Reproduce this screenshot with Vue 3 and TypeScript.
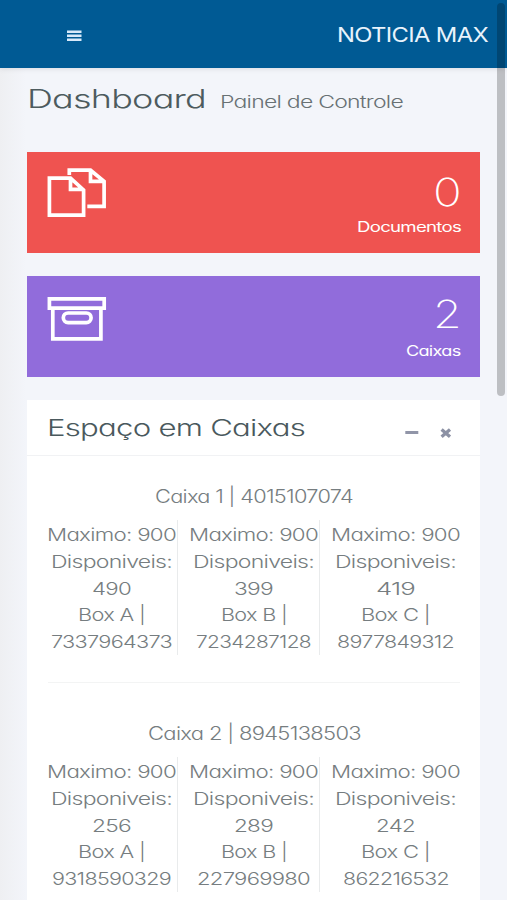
<script setup lang="ts">
import { h, type FunctionalComponent } from 'vue'

interface FitProps { text: string; w: number; size: number; lh: number; base: number }

// A line of text whose advance width is stretched to `w`
const FitText: FunctionalComponent<FitProps> = (p) =>
  h('svg', { class: 'fit', width: p.w, height: p.lh, 'aria-label': p.text }, [
    h('text', {
      x: 0, y: p.base, 'font-size': p.size, textLength: p.w, lengthAdjust: 'spacingAndGlyphs',
    }, p.text),
  ])
FitText.props = ['text', 'w', 'size', 'lh', 'base']

type Line = [string, number]
interface Caixa { title: string; w: number; boxes: Line[][] }

const box = (free: string, name: string, nameW: number, code: string, codeW: number): Line[] => [
  ['Maximo: 900', 129], ['Disponiveis:', 121], [free, 39], [`Box ${name} |`, nameW], [code, codeW],
]

const caixas: Caixa[] = [
  {
    title: 'Caixa 1 | 4015107074', w: 198,
    boxes: [
      box('490', 'A', 67, '7337964373', 121),
      box('399', 'B', 66, '7234287128', 115),
      box('419', 'C', 69, '8977849312', 117),
    ],
  },
  {
    title: 'Caixa 2 | 8945138503', w: 213,
    boxes: [
      box('256', 'A', 67, '9318590329', 119),
      box('289', 'B', 66, '227969980', 113),
      box('242', 'C', 69, '862216532', 106),
    ],
  },
]
</script>

<template>
  <div class="page">
    <header class="topbar">
      <svg class="burger" width="15" height="12" viewBox="0 0 15 12">
        <path d="M0 1.7h14.5M0 5.8h14.5M0 9.8h14.5" stroke="#d8eafa" stroke-width="2.6" />
      </svg>
      <FitText class="brand" text="NOTICIA MAX" :w="151" :size="20" :lh="24" :base="20" />
    </header>

    <main class="content">
      <div class="heading">
        <FitText class="h1" text="Dashboard" :w="179" :size="25.5" :lh="34" :base="26" />
        <FitText class="sub" text="Painel de Controle" :w="183" :size="16.8" :lh="34" :base="26" />
      </div>

      <section class="tile red">
        <svg class="icon" width="60" height="50" viewBox="0 0 60 50" fill="none" stroke="#fff" stroke-width="3.7">
          <path d="M2.4 10.2H23.5L36.6 22V47.2H2.4zM23.5 10.2V21.4H36.6" />
          <path d="M22.3 7V2.2H43.5L57.1 13.3V38.4H40.3M43.5 2.2V13.3H57.1" />
        </svg>
        <div class="figures">
          <FitText class="num" text="0" :w="28" :size="39" :lh="38" :base="34.5" />
          <FitText class="lab" text="Documentos" :w="104" :size="14" :lh="20" :base="19" />
        </div>
      </section>

      <section class="tile purple">
        <svg class="icon" width="60" height="50" viewBox="0 0 60 50" fill="none" stroke="#fff" stroke-width="3.7">
          <path d="M2.4 6.9H57.2V16.2H2.4zM5.8 16.2V46.9H53.9V16.2" />
          <rect x="16.3" y="21" width="27.8" height="9.6" rx="4.8" />
        </svg>
        <div class="figures">
          <FitText class="num" text="2" :w="28" :size="39" :lh="38" :base="33.3" />
          <FitText class="lab" text="Caixas" :w="54.5" :size="14" :lh="20" :base="19" />
        </div>
      </section>

      <section class="card">
        <div class="card-head">
          <FitText class="h2" text="Espaço em Caixas" :w="258" :size="23" :lh="34" :base="26" />
          <div class="tools">
            <svg width="14" height="12" viewBox="0 0 14 12"><path d="M.3 5.5h13" stroke="#9195a8" stroke-width="3" /></svg>
            <svg width="12" height="12" viewBox="0 0 12 12"><path d="M1.6 2.6l8.4 7.2M10 2.6l-8.4 7.2" stroke="#8c91a4" stroke-width="3.3" /></svg>
          </div>
        </div>

        <div class="card-body">
          <article v-for="c in caixas" :key="c.title" class="caixa">
            <FitText class="title" :text="c.title" :w="c.w" :size="18" :lh="27" :base="20" />
            <div class="boxes">
              <div v-for="(b, i) in c.boxes" :key="i" class="box">
                <FitText v-for="l in b" :key="l[0]" :text="l[0]" :w="l[1]" :size="17.6" :lh="26.8" :base="20.6" />
              </div>
            </div>
          </article>
        </div>
      </section>
    </main>

    <div class="scrollbar"></div>
  </div>
</template>

<style>
body { overflow: hidden; }
.fit { display: block; flex: none; overflow: visible; letter-spacing: -.035em; }
</style>

<style scoped>
.page {
  position: relative;
  box-sizing: border-box;
  width: 507px;
  height: 900px;
  overflow: hidden;
  background: linear-gradient(90deg, #eeeff2 0, #f3f5fa 26px) #f3f5fa;
  font-family: Inter, 'Open Sans', sans-serif;
  font-feature-settings: 'cv11' 1;
  font-weight: 300;
  fill: #767d80;
}
.topbar {
  display: flex;
  justify-content: space-between;
  align-items: flex-start;
  box-sizing: border-box;
  height: 67.5px;
  padding: 22px 19.5px 0 67px;
  background: #005a94;
  box-shadow: 0 1px 5px rgba(60, 60, 80, .13);
}
.burger { margin-top: 8px; }
.brand { fill: #e8f3fc; font-weight: 400; }
.content { padding: 14.5px 27px 0 27px; }
.heading { display: flex; gap: 14px; height: 70px; }
.h1 { fill: #4d5b5e; font-weight: 350; }
.sub { fill: #687174; font-weight: 350; }
.tile {
  display: flex;
  justify-content: space-between;
  box-sizing: border-box;
  height: 101px;
  margin-bottom: 23px;
  padding: 15.5px 19.5px 0 20px;
}
.red { background: #ef5350; }
.purple { background: #916cdb; }
.figures { display: flex; flex-direction: column; align-items: flex-end; padding-top: 3.5px; }
.num { fill: #fff; font-weight: 200; }
.lab { fill: #fff; font-weight: 400; margin-top: 3.5px; }
.card { background: #fff; height: 520px; }
.card-head {
  display: flex;
  justify-content: space-between;
  box-sizing: border-box;
  height: 56px;
  padding: 9.7px 28px 0 20px;
  border-bottom: 1px solid #f1f2f4;
}
.h2 { fill: #4a595d; font-weight: 350; }
.tools { display: flex; gap: 21px; padding-top: 17.3px; }
.card-body { padding: 27px 20px 0 21px; }
.caixa { height: 199px; display: flex; flex-direction: column; align-items: center; }
.caixa + .caixa { border-top: 1px solid #f3f4f4; padding-top: 37px; }
.boxes {
  display: grid;
  grid-template-columns: repeat(3, 142px);
  margin: 10px 0 0 -11px;
  height: 134.5px;
}
.box {
  display: flex;
  flex-direction: column;
  align-items: center;
  box-sizing: border-box;
  padding-left: 11.5px;
  border-right: 1px solid #e9ebec;
}
.box:last-child { border-right-color: transparent; }
.scrollbar {
  position: absolute;
  top: 3px;
  right: 2px;
  width: 8px;
  height: 393px;
  border-radius: 4px;
  background: rgba(0, 0, 0, .22);
}
</style>
